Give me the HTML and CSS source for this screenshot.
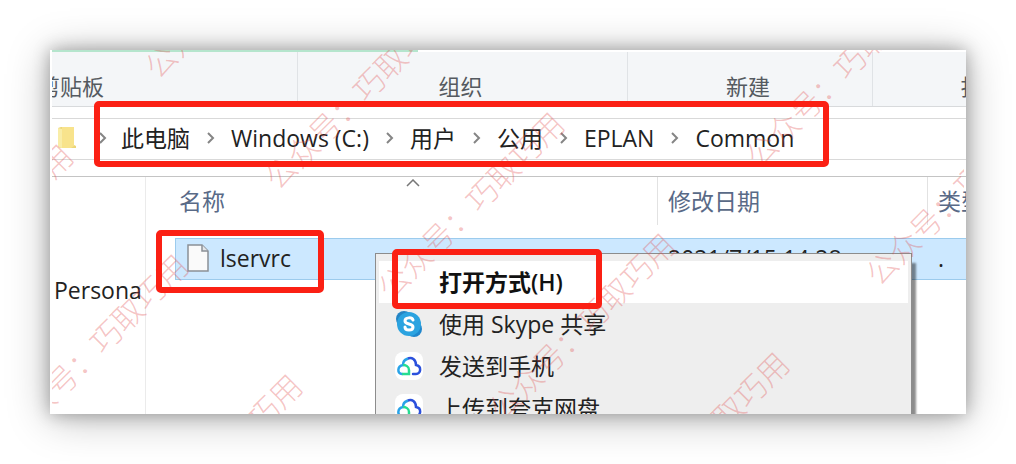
FILE: index.html
```html
<!DOCTYPE html>
<html lang="zh-CN">
<head>
  <meta charset="UTF-8" />
  <title>Common</title>
  <link rel="stylesheet" href="styles.css">
</head>
<body>

<div class="window">

  <!-- RIBBON -->
  <div class="progress"></div>
  <div class="ribbon">
    <div class="group group-clipboard">剪贴板</div>
    <div class="group group-organize">组织</div>
    <div class="group group-new">新建</div>
    <div class="group group-open">打开</div>
  </div>

  <!-- ADDRESS BAR -->
  <div class="address-row">
    <nav class="address">
      <svg class="folder" viewBox="0 0 20 24" width="20" height="24">
        <path d="M1 2 L4 1 H17 V19 L19 20 V22 H4 L1 21 Z" fill="#ecd678"/>
        <path d="M5 1 H17 V20 L14 22 H5 Z" fill="#f8e38c"/>
        <path d="M1 2 L5 3 V22 L1 21 Z" fill="#f9eda8"/>
      </svg>
      <svg class="chevron" viewBox="0 0 9 14" width="9" height="14"><path d="M2 2 L7 7 L2 12"/></svg>
      <a href="#">此电脑</a>
      <svg class="chevron" viewBox="0 0 9 14" width="9" height="14"><path d="M2 2 L7 7 L2 12"/></svg>
      <a href="#">Windows (C:)</a>
      <svg class="chevron" viewBox="0 0 9 14" width="9" height="14"><path d="M2 2 L7 7 L2 12"/></svg>
      <a href="#">用户</a>
      <svg class="chevron" viewBox="0 0 9 14" width="9" height="14"><path d="M2 2 L7 7 L2 12"/></svg>
      <a href="#">公用</a>
      <svg class="chevron" viewBox="0 0 9 14" width="9" height="14"><path d="M2 2 L7 7 L2 12"/></svg>
      <a href="#">EPLAN</a>
      <svg class="chevron" viewBox="0 0 9 14" width="9" height="14"><path d="M2 2 L7 7 L2 12"/></svg>
      <a href="#">Common</a>
    </nav>
  </div>

  <!-- FILES -->
  <div class="main">
    <aside class="sidebar">Persona</aside>
    <div class="files">
      <table>
        <thead>
          <tr>
            <th class="col-name">名称
              <svg class="sort" viewBox="0 0 14 8" width="14" height="8"><path d="M1 7 L7 1 L13 7"/></svg>
            </th>
            <th class="col-date">修改日期</th>
            <th>类型</th>
          </tr>
        </thead>
        <tbody>
          <tr>
            <td>
              <div class="file">
                <svg viewBox="0 0 22 28" width="22" height="28">
                  <path d="M1 1 H15 L21 7 V27 H1 Z" fill="#fafafa" stroke="#8b9096" stroke-width="1.5"/>
                  <path d="M15 1 V7 H21" fill="#e3e6e9" stroke="#8b9096" stroke-width="1.5"/>
                </svg>
                lservrc
              </div>
            </td>
            <td>2021/7/15 14:28</td>
            <td>.</td>
          </tr>
        </tbody>
      </table>
    </div>
  </div>

  <!-- CONTEXT MENU -->
  <div class="menu">
    <button class="menu-item active"><span class="menu-icon"></span>打开方式(H)</button>
    <button class="menu-item">
      <svg class="menu-icon" viewBox="0 0 28 28">
        <circle cx="9" cy="9" r="8" fill="#2484c4"/>
        <circle cx="19" cy="19" r="8" fill="#1f86cc"/>
        <circle cx="14" cy="14" r="12" fill="#2ba3e0"/>
        <path d="M18 10 C17 7 10 7 10 11 C10 15 18 13 18 17 C18 21 10 21 10 17" fill="none" stroke="#fff" stroke-width="3" stroke-linecap="round"/>
      </svg>
      使用 Skype 共享
    </button>
    <button class="menu-item">
      <svg class="menu-icon" viewBox="0 0 28 28">
        <rect width="28" height="28" rx="8" fill="#fff"/>
        <path d="M12 7 C17 4 21 8 21 13 C27 14 26 22 21 22 H18" fill="none" stroke="#2b50dc" stroke-width="2.5" stroke-linecap="round"/>
        <path d="M12 7 C9 8 8 11 8 13 C2 14 2 22 7 22" fill="none" stroke="#28a3e8" stroke-width="2.5" stroke-linecap="round"/>
        <path d="M7 22 H14 V18 C14 14 10 13 8 13" fill="none" stroke="#25dc91" stroke-width="2.5"/>
      </svg>
      发送到手机
    </button>
    <button class="menu-item">
      <svg class="menu-icon" viewBox="0 0 28 28">
        <rect width="28" height="28" rx="8" fill="#fff"/>
        <path d="M12 7 C17 4 21 8 21 13 C27 14 26 22 21 22 H18" fill="none" stroke="#2b50dc" stroke-width="2.5" stroke-linecap="round"/>
        <path d="M12 7 C9 8 8 11 8 13 C2 14 2 22 7 22" fill="none" stroke="#28a3e8" stroke-width="2.5" stroke-linecap="round"/>
        <path d="M7 22 H14 V18 C14 14 10 13 8 13" fill="none" stroke="#25dc91" stroke-width="2.5"/>
      </svg>
      上传到夸克网盘
    </button>
  </div>

  <!-- WATERMARK -->
  <svg class="watermark" aria-hidden="true">
    <text transform="translate(-62 196) rotate(-45)">公众号：巧取巧用</text>
    <text transform="translate(53 306) rotate(-45)">公众号：巧取巧用</text>
    <text transform="translate(167 426) rotate(-45)">公众号：巧取巧用</text>
    <text transform="translate(196 -57) rotate(-45)">公众号：巧取巧用</text>
    <text transform="translate(316 54) rotate(-45)">公众号：巧取巧用</text>
    <text transform="translate(429 164) rotate(-45)">公众号：巧取巧用</text>
    <text transform="translate(540 285) rotate(-45)">公众号：巧取巧用</text>
    <text transform="translate(654 404) rotate(-45)">公众号：巧取巧用</text>
    <text transform="translate(797 32) rotate(-45)">公众号：巧取巧用</text>
    <text transform="translate(917 150) rotate(-45)">公众号：巧取巧用</text>
  </svg>

  <!-- MARKS -->
  <div class="mark mark-path"></div>
  <div class="mark mark-file"></div>
  <div class="mark mark-open"></div>
</div>

</body>
</html>
```
FILE: styles.css
```css
* {
  box-sizing: border-box;
}

body {
  margin: 0;
  padding: 50px;
  height: 100vh;
  display: flex;
  background: #fff;
  color: #222;
  font-family: "Open Sans", "Noto Sans CJK SC", sans-serif;
  font-size: 23px;
  line-height: 30px;
  overflow: hidden;
}

.window {
  flex: 1;
  min-width: 0;
  position: relative;
  display: flex;
  flex-direction: column;
  overflow: hidden;
  background: #fff;
  border-left: 2px solid #fff;
  box-shadow: 0 0 16px rgba(0,0,0,0.3), 0 4px 40px rgba(0,0,0,0.28);
}

/* ribbon */
.progress {
  width: 40%;
  height: 2px;
  flex: none;
  background: #b5e5cd;
}

.ribbon {
  display: flex;
  flex: none;
  height: 55px;
  margin-left: -203px;
  background: #f4f6f8;
  border-bottom: 1px solid #d8dadc;
  font-size: 22px;
}

.group {
  flex: none;
  padding: 19px 4px 0 0;
  text-align: center;
  color: #555a60;
  border-right: 1px solid #e0e3e6;
}

.group-clipboard { width: 449px; }
.group-organize { width: 330px; }
.group-new { width: 245px; }
.group-open { width: 224px; }

/* address bar */
.address-row {
  flex: none;
  padding: 11px 0 16px;
  border-bottom: 1px solid #c4c4c4;
}

.address {
  display: flex;
  align-items: center;
  height: 42px;
  padding: 0 0 2px 5px;
  border-top: 1px solid #d9d9d9;
  border-bottom: 1px solid #d9d9d9;
}

.address a {
  color: #222;
  text-decoration: none;
}

.chevron {
  margin: 0 16px;
  fill: none;
  stroke: #858585;
  stroke-width: 2;
}

.folder + .chevron {
  margin: 0 14px 0 21px;
}

/* files */
.main {
  flex: 1;
  display: flex;
}

.sidebar {
  width: 94px;
  flex: none;
  padding: 98px 0 0 2px;
  border-right: 1px solid #ebebeb;
}

.files {
  flex: 1;
  min-width: 0;
  padding-left: 29px;
}

table {
  width: 100%;
  table-layout: fixed;
  border-collapse: separate;
  border-spacing: 0;
}

th {
  position: relative;
  height: 48px;
  padding: 0 0 0 10px;
  border-left: 1px solid #e2e2e2;
  color: #596a87;
  font-weight: normal;
  text-align: left;
  white-space: nowrap;
}

.col-name {
  width: 482px;
  padding-left: 4px;
  border-left: none;
}

.col-date {
  width: 270px;
}

.sort {
  position: absolute;
  top: 2px;
  left: 231px;
  fill: none;
  stroke: #777;
  stroke-width: 1.5;
}

tbody::before {
  content: "";
  display: block;
  height: 13px;
}

td {
  height: 42px;
  padding: 0 0 2px 11px;
  background: #cce8ff;
  border-top: 1px solid #9ccbed;
  border-bottom: 1px solid #9ccbed;
  white-space: nowrap;
}

td:first-child {
  border-left: 1px solid #9ccbed;
}

.file {
  display: flex;
  align-items: center;
  gap: 11px;
}

/* context menu */
.menu {
  position: absolute;
  top: 203px;
  left: 323px;
  right: 54px;
  padding: 7px 3px;
  background: #eee;
  border: 1px solid #8c8c8c;
  box-shadow: 4px 10px 2px rgba(0,0,0,0.45);
}

.menu-item {
  display: flex;
  align-items: center;
  gap: 16px;
  width: 100%;
  height: 42px;
  padding: 0 16px;
  border: none;
  background: none;
  color: #222;
  font: inherit;
  text-align: left;
}

.menu-item.active {
  background: #fff;
  color: #111;
  font-weight: 600;
}

.menu-icon {
  width: 28px;
  height: 28px;
  flex: none;
}

.watermark {
  position: absolute;
  top: 0;
  left: -2px;
  width: 100%;
  height: 100%;
  pointer-events: none;
}

.watermark text {
  font-family: "Noto Sans CJK SC", sans-serif;
  font-size: 31px;
  font-weight: 300;
  text-anchor: middle;
  fill: rgba(225,75,75,0.32);
}

/* red marks */
.mark {
  position: absolute;
  border: 6px solid #fb2014;
  border-radius: 5px;
  pointer-events: none;
}

.mark-path {
  top: 51px;
  left: 42px;
  width: 735px;
  height: 66px;
}

.mark-file {
  top: 180px;
  left: 104px;
  width: 168px;
  height: 63px;
}

.mark-open {
  top: 199px;
  left: 340px;
  width: 210px;
  height: 60px;
}
```
